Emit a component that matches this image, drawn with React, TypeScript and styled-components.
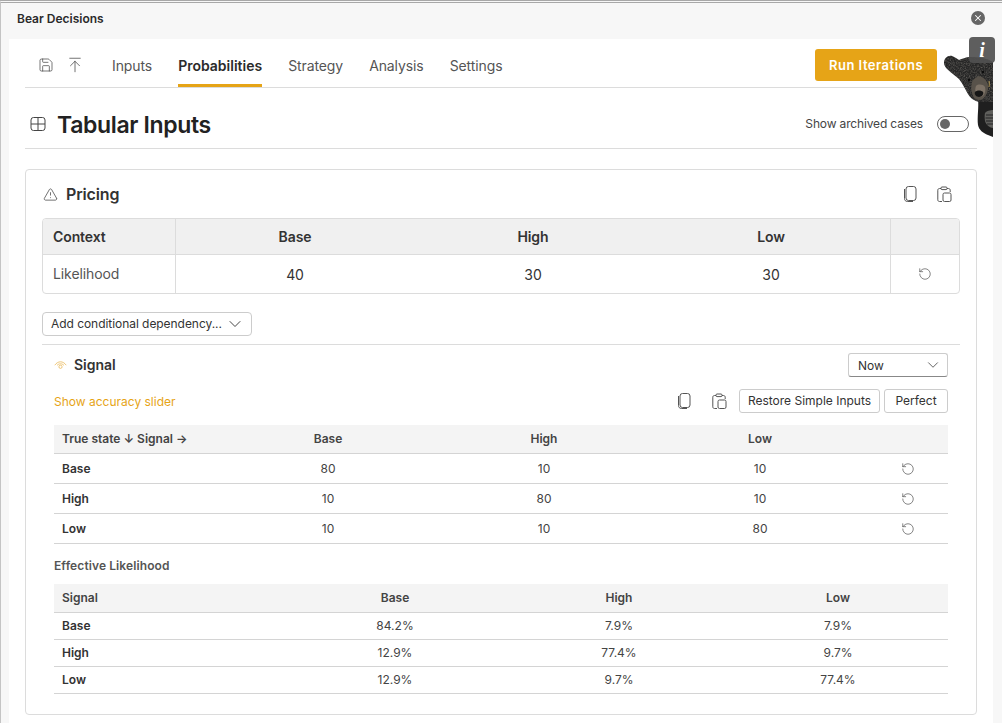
import React from 'react';
import styled, { createGlobalStyle } from 'styled-components';
import { ArrowUpToLine, ChevronDown, RotateCcw, Save, TriangleAlert, X } from 'lucide-react';

const accent = '#e6a417';
const line = '#dcdcdc';

const GlobalStyle = createGlobalStyle`
  html, body {
    margin: 0;
    padding: 0;
    background: #fff;
  }
  * {
    box-sizing: border-box;
  }
  body {
    font-family: Inter, "Liberation Sans", sans-serif;
    color: #333;
  }
`;

const Frame = styled.div`
  position: relative;
  width: 1002px;
  height: 723px;
  overflow: hidden;
  background: #f7f7f7;
  border-top: 3px double #a8a8a8;
  border-left: 1px solid #c4c4c4;
  display: flex;
  flex-direction: column;
`;

const TitleBar = styled.div`
  flex: none;
  height: 36px;
  padding: 0 17px 6px 16px;
  display: flex;
  align-items: center;
  justify-content: space-between;
  font-size: 12px;
  font-weight: 600;
  color: #2b2b2b;
`;

const CloseButton = styled.div`
  width: 14px;
  height: 14px;
  border-radius: 50%;
  background: #666;
  color: #fff;
  display: flex;
  align-items: center;
  justify-content: center;
`;

const Body = styled.div`
  flex: 1;
  margin: 0 9px 0 8px;
  padding: 0 16px;
  background: #fff;
`;

const Toolbar = styled.div`
  height: 49px;
  padding: 4px 40px 0 13px;
  border-bottom: 1px solid ${line};
  display: flex;
  align-items: center;
`;

const IconGroup = styled.div`
  display: flex;
  align-items: center;
  gap: 12px;
  color: #444;
  margin-right: 28px;
`;

const Tabs = styled.div`
  flex: 1;
  height: 100%;
  display: flex;
  gap: 26px;
`;

const Tab = styled.div<{ $active?: boolean }>`
  display: flex;
  align-items: center;
  padding-top: 3px;
  font-size: 14px;
  font-weight: ${p => (p.$active ? 600 : 400)};
  letter-spacing: ${p => (p.$active ? 0 : -0.1)}px;
  color: ${p => (p.$active ? '#2b2b2b' : '#555')};
  border-bottom: 3px solid ${p => (p.$active ? accent : 'transparent')};
`;

const RunButton = styled.button`
  width: 122px;
  height: 32px;
  border: 0;
  border-radius: 3px;
  background: ${accent};
  color: #fff;
  font-family: inherit;
  font-size: 13px;
  font-weight: 600;
  letter-spacing: 0.5px;
`;

const PageHead = styled.div`
  height: 61px;
  padding: 12px 8px 0 5px;
  border-bottom: 1px solid ${line};
  display: flex;
  align-items: center;
`;

const PageTitle = styled.h1`
  flex: 1;
  margin: 1px 0 0 11px;
  font-size: 23px;
  font-weight: 600;
  letter-spacing: -0.35px;
  color: #222;
`;

const ToggleLabel = styled.span`
  margin: -1px 14px 0 0;
  font-size: 12px;
  letter-spacing: -0.15px;
  color: #444;
`;

const Toggle = styled.div`
  width: 32px;
  height: 16px;
  border: 1px solid #666;
  border-radius: 8px;
  padding: 2px;
`;

const ToggleKnob = styled.div`
  width: 10px;
  height: 10px;
  border-radius: 50%;
  background: #666;
`;

const Card = styled.section`
  margin-top: 20px;
  height: 546px;
  padding: 0 16px;
  border: 1px solid ${line};
  border-radius: 4px;
`;

const CardHead = styled.div`
  height: 48px;
  padding: 0 8px 0 1px;
  display: flex;
  align-items: center;
  color: #333;
`;

const CardTitle = styled.h2`
  flex: 1;
  margin: 0 0 0 8px;
  font-size: 16px;
  font-weight: 600;
  letter-spacing: -0.15px;
  color: #333;
`;

const ClipIcons = styled.div<{ $gap: number }>`
  display: flex;
  align-items: center;
  gap: ${p => p.$gap}px;
  color: #555;
`;

const InputTableWrap = styled.div`
  border: 1px solid ${line};
  border-radius: 4px;
  overflow: hidden;
`;

const InputTable = styled.table`
  width: 100%;
  table-layout: fixed;
  border-collapse: separate;
  border-spacing: 0;
  font-size: 14px;
  letter-spacing: -0.1px;
`;

const InputHead = styled.th`
  height: 36px;
  padding: 0 10px;
  background: #f0f0f0;
  border-bottom: 1px solid ${line};
  font-weight: 600;
  color: #333;
  text-align: center;

  &:first-child {
    text-align: left;
    border-right: 1px solid ${line};
  }
  &:last-child {
    border-left: 1px solid ${line};
  }
`;

const InputCell = styled.td`
  height: 38px;
  padding: 0 10px;
  color: #333;
  text-align: center;
  font-size: 14px;

  &:first-child {
    padding-bottom: 2px;
    text-align: left;
    color: #555;
    border-right: 1px solid ${line};
  }
  &:last-child {
    border-left: 1px solid ${line};
    color: #444;
  }
`;

const DependencyButton = styled.div`
  width: 210px;
  height: 24px;
  margin: 18px 0 8px;
  padding: 0 6px 1px 8px;
  border: 1px solid #ccc;
  border-radius: 4px;
  display: flex;
  align-items: center;
  justify-content: space-between;
  font-size: 12px;
  letter-spacing: -0.05px;
  color: #333;
`;

const Signal = styled.div`
  border-top: 1px solid ${line};
  padding: 8px 12px 0;
`;

const SignalHead = styled.div`
  height: 24px;
  display: flex;
  align-items: center;
`;

const SignalTitle = styled.h3`
  flex: 1;
  margin: -2px 0 0 7px;
  font-size: 14px;
  font-weight: 600;
  letter-spacing: -0.05px;
  color: #333;
`;

const SelectBox = styled.div`
  width: 100px;
  height: 24px;
  padding: 0 5px 0 9px;
  border: 1px solid #ccc;
  border-bottom-color: #888;
  border-radius: 3px;
  display: flex;
  align-items: center;
  justify-content: space-between;
  font-size: 12px;
  color: #333;
`;

const ActionRow = styled.div`
  height: 24px;
  margin: 12px 0;
  display: flex;
  align-items: center;
`;

const SliderLink = styled.span`
  flex: 1;
  font-size: 12px;
  color: ${accent};
`;

const ActionIcons = styled(ClipIcons)`
  margin-right: 8px;
`;

const SmallButton = styled.div<{ $width: number }>`
  width: ${p => p.$width}px;
  height: 24px;
  margin-left: 4px;
  padding-bottom: 1px;
  border: 1px solid #ccc;
  border-radius: 3px;
  display: flex;
  align-items: center;
  justify-content: center;
  font-size: 12px;
  color: #333;
`;

const GridTable = styled.table`
  width: 100%;
  table-layout: fixed;
  border-collapse: separate;
  border-spacing: 0;
  font-size: 12px;
`;

const GridCol = styled.col<{ $width: number }>`
  width: ${p => p.$width}px;
`;

const GridHead = styled.th`
  height: 29px;
  padding: 0 8px 2px;
  background: #f4f4f4;
  border-bottom: 1px solid #d4d4d4;
  font-weight: 600;
  color: #444;
  text-align: center;

  &:first-child {
    text-align: left;
  }
`;

const GridCell = styled.td<{ $height: number; $lift?: boolean }>`
  height: ${p => p.$height}px;
  padding: 0 8px ${p => (p.$lift ? 2 : 0)}px;
  border-bottom: 1px solid #d4d4d4;
  color: #444;
  text-align: center;
`;

const RowLabel = styled.td<{ $height: number; $lift?: boolean }>`
  height: ${p => p.$height}px;
  padding: 0 8px ${p => (p.$lift ? 2 : 0)}px;
  border-bottom: 1px solid #d4d4d4;
  font-weight: 600;
  color: #333;
`;

const ResetCell = styled.td`
  padding: 0;
  border-bottom: 1px solid #d4d4d4;
  text-align: center;
  color: #444;
`;

const ResetIcon = styled(RotateCcw)`
  display: block;
  margin: 0 auto;
`;

const SectionLabel = styled.div`
  margin: 14px 0 10px;
  height: 16px;
  line-height: 16px;
  font-size: 12px;
  font-weight: 600;
  letter-spacing: 0.1px;
  color: #555;
`;

const BearSpot = styled.div`
  position: absolute;
  left: 942px;
  top: 52px;
  width: 50px;
  height: 82px;
`;

const InfoBadge = styled.div`
  position: absolute;
  left: 968px;
  top: 34px;
  width: 26px;
  height: 26px;
  border-radius: 4px;
  background: rgba(80, 80, 80, 0.92);
  color: #fff;
  font-family: "Liberation Serif", serif;
  font-style: italic;
  font-weight: 700;
  font-size: 20px;
  display: flex;
  align-items: center;
  justify-content: center;
`;

function GridIcon() {
  return (
    <svg width="16" height="16" viewBox="0 0 16 16" fill="none" stroke="#444" strokeWidth="1">
      <rect x="1" y="1.5" width="14" height="13" rx="2.5" />
      <path d="M8 1.5v13M1 8h14" />
    </svg>
  );
}

function CopyIcon() {
  return (
    <svg width="14" height="16" viewBox="0 0 14 16" fill="none" stroke="currentColor" strokeWidth="1">
      <rect x="3" y="0.5" width="10" height="14" rx="2.5" />
      <path d="M1.5 3v9.5c0 1.7 1 3 3 3H10" />
    </svg>
  );
}

function PasteIcon() {
  return (
    <svg width="15" height="17" viewBox="0 0 15 17" fill="none" stroke="currentColor" strokeWidth="1">
      <path d="M4 2.5H2.500C1.400 2.500 .8 3.200 .8 4.200v9.600c0 1 .6 1.700 1.700 1.700H5" />
      <path d="M10 2.500h1.500c1 0 1.700.7 1.700 1.700V6" />
      <rect x="4" y="1" width="6" height="2.600" rx="1" />
      <rect x="6" y="7" width="8" height="8.500" rx="1.500" />
    </svg>
  );
}

function SignalIcon() {
  return (
    <svg width="13" height="10" viewBox="0 0 13 10" fill="none" stroke="#eab95a" strokeWidth="0.8">
      <path d="M.8 5.200C2.300 3 4.300 1.800 6.500 1.800s4.200 1.200 5.700 3.400" />
      <path d="M3 5.400C4 4.400 5.200 3.800 6.500 3.800s2.500.6 3.500 1.600" />
      <circle cx="6.500" cy="6.800" r="1.600" />
    </svg>
  );
}

function Bear() {
  return (
    <svg width="50" height="82" viewBox="0 0 50 82">
      <defs>
        <filter id="fur" x="0" y="0" width="100%" height="100%" colorInterpolationFilters="sRGB">
          <feTurbulence type="fractalNoise" baseFrequency="0.8" numOctaves="2" seed="4" />
          <feColorMatrix values="0 0 0 0 0.42  0 0 0 0 0.41  0 0 0 0 0.39  1.6 0 0 0 -0.62" />
          <feComposite in2="SourceGraphic" operator="in" />
          <feMerge>
            <feMergeNode in="SourceGraphic" />
            <feMergeNode />
          </feMerge>
        </filter>
      </defs>
      <path fill="#1f1f1f" d="M35 44h15v38l-5-2c-5-2-9-5-10-10-1-8 1-18 0-26z" />
      <g filter="url(#fur)">
        <path
          fill="#262626"
          d="M1 8C1 3 5 0 9 1c3 1 5 3 7 4 3-1 7-3 11-3 9 0 17 1 23 5v40H36c-4-1-8-3-11-8-3-5-5-10-9-15C8 17 1 13 1 8z"
        />
      </g>
      <path fill="#58524a" d="M29 27c2-4 7-7 10-5 4 2 7 7 6 12-1 6-4 11-9 11-4 0-6-3-7-7-1-3-1-7 0-11z" />
      <path fill="#7d7266" d="M33 31c2-2 7-2 9 1 1 3 0 7-2 9-3 2-6 1-7-2-1-3-1-6 0-8z" />
      <path fill="#161616" d="M32 37c2-2 6-2 8 0 1 2-1 5-4 5s-5-3-4-5z" />
      <circle cx="26" cy="25" r="1.200" fill="#0c0c0c" />
      <circle cx="40" cy="17" r="1.200" fill="#0c0c0c" />
      <path stroke="#c9a957" strokeWidth="0.800" fill="none" d="M46 26c.5 2 .5 4 0 6" />
      <path fill="#5f5f5c" d="M42 58c2-3 8-3 8-3v18c-3 0-7-3-8-7-.5-3-.5-6 0-8z" />
      <path stroke="#242424" strokeWidth="1" fill="none" d="M43 60h7M42.500 63h7.500M43 66h7M44 69h6" />
    </svg>
  );
}

const effective = [
  ['Base', '84.2%', '7.9%', '7.9%'],
  ['High', '12.9%', '77.4%', '9.7%'],
  ['Low', '12.9%', '9.7%', '77.4%'],
];

const accuracy = [
  ['Base', '80', '10', '10'],
  ['High', '10', '80', '10'],
  ['Low', '10', '10', '80'],
];

export default function App() {
  return (
    <Frame>
      <GlobalStyle />
      <TitleBar>
        Bear Decisions
        <CloseButton>
          <X size={10} strokeWidth={2.5} />
        </CloseButton>
      </TitleBar>
      <Body>
        <Toolbar>
          <IconGroup>
            <Save size={16} strokeWidth={1.1} />
            <ArrowUpToLine size={18} strokeWidth={1} />
          </IconGroup>
          <Tabs>
            <Tab>Inputs</Tab>
            <Tab $active>Probabilities</Tab>
            <Tab>Strategy</Tab>
            <Tab>Analysis</Tab>
            <Tab>Settings</Tab>
          </Tabs>
          <RunButton>Run Iterations</RunButton>
        </Toolbar>
        <PageHead>
          <GridIcon />
          <PageTitle>Tabular Inputs</PageTitle>
          <ToggleLabel>Show archived cases</ToggleLabel>
          <Toggle>
            <ToggleKnob />
          </Toggle>
        </PageHead>
        <Card>
          <CardHead>
            <TriangleAlert size={15} strokeWidth={1.1} />
            <CardTitle>Pricing</CardTitle>
            <ClipIcons $gap={20}>
              <CopyIcon />
              <PasteIcon />
            </ClipIcons>
          </CardHead>
          <InputTableWrap>
            <InputTable>
              <colgroup>
                <GridCol $width={133} />
                <col />
                <col />
                <col />
                <GridCol $width={69} />
              </colgroup>
              <thead>
                <tr>
                  <InputHead>Context</InputHead>
                  <InputHead>Base</InputHead>
                  <InputHead>High</InputHead>
                  <InputHead>Low</InputHead>
                  <InputHead />
                </tr>
              </thead>
              <tbody>
                <tr>
                  <InputCell>Likelihood</InputCell>
                  <InputCell>40</InputCell>
                  <InputCell>30</InputCell>
                  <InputCell>30</InputCell>
                  <InputCell>
                    <ResetIcon size={14} strokeWidth={1.1} />
                  </InputCell>
                </tr>
              </tbody>
            </InputTable>
          </InputTableWrap>
          <DependencyButton>
            Add conditional dependency...
            <ChevronDown size={20} strokeWidth={1.1} />
          </DependencyButton>
          <Signal>
            <SignalHead>
              <SignalIcon />
              <SignalTitle>Signal</SignalTitle>
              <SelectBox>
                Now
                <ChevronDown size={18} strokeWidth={1} />
              </SelectBox>
            </SignalHead>
            <ActionRow>
              <SliderLink>Show accuracy slider</SliderLink>
              <ActionIcons $gap={21}>
                <CopyIcon />
                <PasteIcon />
              </ActionIcons>
              <SmallButton $width={141}>Restore Simple Inputs</SmallButton>
              <SmallButton $width={64}>Perfect</SmallButton>
            </ActionRow>
            <GridTable>
              <colgroup>
                <GridCol $width={166} />
                <GridCol $width={216} />
                <GridCol $width={216} />
                <GridCol $width={216} />
                <GridCol $width={80} />
              </colgroup>
              <thead>
                <tr>
                  <GridHead>True state ↓ Signal →</GridHead>
                  <GridHead>Base</GridHead>
                  <GridHead>High</GridHead>
                  <GridHead>Low</GridHead>
                  <GridHead />
                </tr>
              </thead>
              <tbody>
                {accuracy.map(row => (
                  <tr key={row[0]}>
                    <RowLabel $height={30}>{row[0]}</RowLabel>
                    <GridCell $height={30}>{row[1]}</GridCell>
                    <GridCell $height={30}>{row[2]}</GridCell>
                    <GridCell $height={30}>{row[3]}</GridCell>
                    <ResetCell>
                      <ResetIcon size={14} strokeWidth={1.1} />
                    </ResetCell>
                  </tr>
                ))}
              </tbody>
            </GridTable>
            <SectionLabel>Effective Likelihood</SectionLabel>
            <GridTable>
              <colgroup>
                <GridCol $width={226} />
                <GridCol $width={230} />
                <GridCol $width={218} />
                <GridCol $width={220} />
              </colgroup>
              <thead>
                <tr>
                  <GridHead>Signal</GridHead>
                  <GridHead>Base</GridHead>
                  <GridHead>High</GridHead>
                  <GridHead>Low</GridHead>
                </tr>
              </thead>
              <tbody>
                {effective.map(row => (
                  <tr key={row[0]}>
                    <RowLabel $height={27} $lift>{row[0]}</RowLabel>
                    <GridCell $height={27} $lift>{row[1]}</GridCell>
                    <GridCell $height={27} $lift>{row[2]}</GridCell>
                    <GridCell $height={27} $lift>{row[3]}</GridCell>
                  </tr>
                ))}
              </tbody>
            </GridTable>
          </Signal>
        </Card>
      </Body>
      <BearSpot>
        <Bear />
      </BearSpot>
      <InfoBadge>i</InfoBadge>
    </Frame>
  );
}
